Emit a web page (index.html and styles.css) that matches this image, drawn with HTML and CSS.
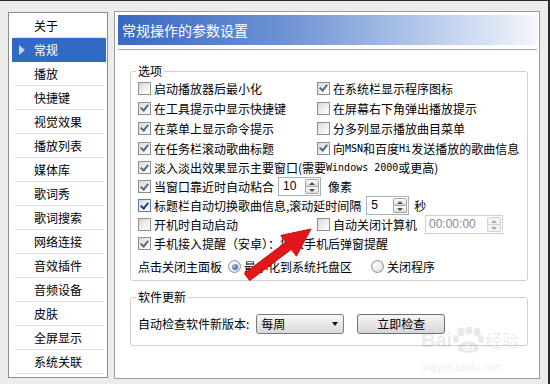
FILE: index.html
```html
<!doctype html>
<html lang="zh-CN">
<head>
    <meta charset="utf-8" />
    <meta name="viewport" content="width=device-width, initial-scale=1.0">
    <title>参数设置</title>
    <link rel="stylesheet" href="styles.css">
</head>
<body>

    <div class="window">
        <!-- 左侧分类列表 -->
        <ul class="nav">
            <li>关于</li>
            <li class="active"><span class="tri"></span>常规</li>
            <li>播放</li>
            <li>快捷键</li>
            <li>视觉效果</li>
            <li>播放列表</li>
            <li>媒体库</li>
            <li>歌词秀</li>
            <li>歌词搜索</li>
            <li>网络连接</li>
            <li>音效插件</li>
            <li>音频设备</li>
            <li>皮肤</li>
            <li>全屏显示</li>
            <li>系统关联</li>
        </ul>

        <!-- 右侧设置面板 -->
        <div class="panel">
            <div class="title">常规操作的参数设置</div>
            <div class="title-line"></div>

            <div class="content">
                <fieldset class="group opts">
                    <legend>选项</legend>

                    <div class="row">
                        <label class="cb col1"><span class="box"></span>启动播放器后最小化</label>
                        <label class="cb"><span class="box on"></span>在系统栏显示程序图标</label>
                    </div>
                    <div class="row">
                        <label class="cb col1"><span class="box on"></span>在工具提示中显示快捷键</label>
                        <label class="cb"><span class="box"></span>在屏幕右下角弹出播放提示</label>
                    </div>
                    <div class="row">
                        <label class="cb col1"><span class="box on"></span>在菜单上显示命令提示</label>
                        <label class="cb"><span class="box"></span>分多列显示播放曲目菜单</label>
                    </div>
                    <div class="row">
                        <label class="cb col1"><span class="box on"></span>在任务栏滚动歌曲标题</label>
                        <label class="cb"><span class="box on"></span>向<span class="mono">MSN</span>和百度<span class="mono">Hi</span>发送播放的歌曲信息</label>
                    </div>
                    <div class="row s">
                        <label class="cb"><span class="box on"></span>淡入淡出效果显示主要窗口(需要<span class="mono">Windows 2000</span>或更高)</label>
                    </div>
                    <div class="row s">
                        <label class="cb"><span class="box on"></span>当窗口靠近时自动粘合</label>
                        <div class="spin sp1"><span class="v">10</span><span class="b"><i class="up"></i><i class="dn"></i></span></div>
                        <span class="unit u1">像素</span>
                    </div>
                    <div class="row s">
                        <label class="cb"><span class="box on focus"></span>标题栏自动切换歌曲信息,滚动延时间隔</label>
                        <div class="spin sp2"><span class="v">5</span><span class="b"><i class="up"></i><i class="dn"></i></span></div>
                        <span class="unit u2">秒</span>
                    </div>
                    <div class="row s">
                        <label class="cb col1"><span class="box"></span>开机时自动启动</label>
                        <label class="cb"><span class="box"></span>自动关闭计算机</label>
                        <div class="spin time"><span class="v">00:00:00</span><span class="b"><i class="up"></i><i class="dn"></i></span></div>
                    </div>
                    <div class="row s">
                        <label class="cb"><span class="box on"></span>手机接入提醒（安卓）：接入手机后弹窗提醒</label>
                    </div>
                    <div class="row s radios">
                        <span>点击关闭主面板</span>
                        <label class="rb r1"><span class="radio on"></span>最小化到系统托盘区</label>
                        <label class="rb r2"><span class="radio"></span>关闭程序</label>
                    </div>
                </fieldset>

                <fieldset class="group update">
                    <legend>软件更新</legend>
                    <div class="row upd">
                        <span>自动检查软件新版本:</span>
                        <div class="select"><span>每周</span><span class="caret"></span></div>
                        <button class="button">立即检查</button>
                    </div>
                </fieldset>
            </div>
        </div>
    </div>

    <!-- 红色箭头（覆盖在内容上） -->
    <svg class="arrow" width="550" height="384" viewBox="0 0 550 384">
        <polygon points="244.3,273.4 285.9,242.2 280.8,235.4 311,229 296.4,256.2 291.3,249.4 249.7,280.6" fill="#e3161c" stroke="#c80d12" stroke-width="1" stroke-linejoin="round"/>
    </svg>

    <!-- 水印 -->
    <div class="watermark">
        <div class="wm-top">
            <span>Bai</span>
            <svg class="paw" width="33" height="26" viewBox="0 0 33 26">
                <ellipse cx="9" cy="5" rx="3.5" ry="4.5" />
                <ellipse cx="17" cy="3.5" rx="3.5" ry="4" />
                <ellipse cx="25" cy="5" rx="3.5" ry="4.5" />
                <ellipse cx="4" cy="12" rx="3" ry="4" />
                <ellipse cx="29" cy="12" rx="3" ry="4" />
                <path d="M6 22 C6 12 27 12 27 22 C27 27 6 27 6 22 Z" />
                <text x="16.5" y="24" text-anchor="middle">du</text>
            </svg>
            <span class="wm-cn">经验</span>
        </div>
        <div class="wm-url">jingyan.baidu.com</div>
    </div>

</body>
</html>
```

FILE: styles.css
```css
* {
    box-sizing: border-box;
}

body {
    margin: 0;
    width: 550px;
    height: 384px;
    overflow: hidden;
    position: relative;
    background-color: #ececec;
    border-top: 1px solid #2a2a2a;
    border-right: 2px solid #2a2a2a;
    font-family: "Noto Sans CJK SC", "Noto Sans", sans-serif;
    font-size: 12px;
    color: #000;
}

.window {
    display: flex;
    align-items: flex-start;
    gap: 6px;
    padding: 10px 0 0 8px;
}

/* 左侧列表 */
.nav {
    list-style: none;
    margin: 1px 0 0;
    padding: 1px 1px 0 3px;
    width: 100px;
    height: 366px;
    background-color: #fff;
    border: 1px solid #8c8c8c;
}

.nav li {
    height: 24px;
    line-height: 23px;
    margin: 0 2px;
    padding-left: 20px;
    border-bottom: 1px solid #e2e2e2;
    white-space: nowrap;
}

.nav li.active {
    margin: 0;
    padding-left: 7px;
    background-color: #316ac5;
    border-bottom-color: #316ac5;
    color: #fff;
    display: flex;
    align-items: center;
}

.tri {
    width: 0;
    height: 0;
    border-left: 6px solid #c4d8f6;
    border-top: 5px solid transparent;
    border-bottom: 5px solid transparent;
    margin-right: 9px;
}

/* 右侧面板 */
.panel {
    width: 426px;
    height: 368px;
    background-color: #fff;
    border: 1px solid #9c9c9c;
    padding: 3px 2px 0 3px;
}

.title {
    height: 30px;
    line-height: 30px;
    padding-left: 4px;
    color: #fff;
    font-size: 14px;
    background: linear-gradient(90deg, #3a69c2 0%, #6e92d3 40%, #b2c7ea 72%, #f4f6fb 100%);
}

.title-line {
    margin-top: 4px;
    border-top: 1px solid #a8a8a8;
}

.content {
    padding: 0 9px 0 12px;
}

.group {
    margin: 14px 0 0;
    padding: 0 7px 4px 7px;
    border: 1px solid #d0d0d0;
    border-radius: 3px;
    min-width: 0;
}

.group legend {
    padding: 0 2px;
    margin-left: -2px;
    line-height: 14px;
}

.group.update {
    margin-top: 9px;
    padding-top: 9px;
    padding-bottom: 11px;
}

.row {
    display: flex;
    align-items: center;
    height: 20px;
    white-space: nowrap;
}

.row.s {
    height: 19px;
}

.cb, .rb {
    display: flex;
    align-items: center;
}

.col1 {
    width: 179px;
}

.mono {
    font-family: "DejaVu Sans Mono", "Liberation Mono", monospace;
    font-size: 10px;
}

/* 复选框 */
.box {
    flex: none;
    width: 13px;
    height: 13px;
    margin-right: 3px;
    border: 1px solid #8e8f8f;
    background: linear-gradient(135deg, #d8d8d3, #f6f6f6 70%, #fff);
    display: flex;
    align-items: center;
    justify-content: center;
}

.box.on::after {
    content: "";
    width: 3px;
    height: 6px;
    border: solid #56698c;
    border-width: 0 2px 2px 0;
    transform: translate(0, -1px) rotate(40deg);
}

.box.focus {
    border-color: #5b7cb4;
}

.box.focus::after {
    border-color: #1c3d8c;
}

/* 数值框 */
.spin {
    display: flex;
    height: 19px;
    border: 1px solid #a9b3bf;
    background-color: #fff;
}

.spin .v {
    flex: 1;
    padding-left: 4px;
    font-family: "Liberation Sans", sans-serif;
    line-height: 17px;
}

.spin .b {
    width: 15px;
    display: flex;
    flex-direction: column;
    padding: 1px 1px 1px 0;
}

.spin i {
    flex: 1;
    border: 1px solid #a4a4a4;
    background: linear-gradient(#fcfcfc, #dedede);
    display: flex;
    align-items: center;
    justify-content: center;
}

.spin i.up {
    border-radius: 2px 2px 0 0;
}

.spin i.dn {
    border-top: none;
    border-radius: 0 0 2px 2px;
}

.spin i.up::after {
    content: "";
    border-left: 3px solid transparent;
    border-right: 3px solid transparent;
    border-bottom: 3px solid #505050;
}

.spin i.dn::after {
    content: "";
    border-left: 3px solid transparent;
    border-right: 3px solid transparent;
    border-top: 3px solid #505050;
}

.sp1 {
    margin-left: 4px;
    width: 43px;
}

.u1 {
    margin-left: 7px;
}

.sp2 {
    margin-left: 5px;
    width: 43px;
}

.u2 {
    margin-left: 5px;
}

.spin.time {
    margin-left: 8px;
    width: 78px;
    border-color: #cfcfcf;
}

.spin.time .v {
    color: #8a8a8a;
    padding-left: 3px;
}

.spin.time i {
    border-color: #d2d2d2;
    background: #f4f4f4;
}

.spin.time i.up::after {
    border-bottom-color: #a8a8a8;
}

.spin.time i.dn::after {
    border-top-color: #a8a8a8;
}

/* 单选框 */
.radios {
    margin-top: 4px;
}

.radio {
    flex: none;
    width: 13px;
    height: 13px;
    margin-right: 3px;
    border-radius: 50%;
    border: 1px solid #8e8f8f;
    background: radial-gradient(circle at 35% 35%, #fff, #d6d6d6);
    display: flex;
    align-items: center;
    justify-content: center;
}

.radio.on::after {
    content: "";
    width: 6px;
    height: 6px;
    border-radius: 50%;
    background: radial-gradient(circle at 35% 35%, #9cc0f0, #1f4f9a);
}

.r1 {
    margin-left: 6px;
}

.r2 {
    margin-left: 19px;
}

/* 软件更新 */
.row.upd {
    height: 21px;
}

.select {
    margin-left: 7px;
    width: 88px;
    height: 20px;
    border: 1px solid #7a7a7a;
    border-radius: 3px;
    background: linear-gradient(#fafafa, #e8e8e8 50%, #d8d8d8);
    display: flex;
    align-items: center;
    justify-content: space-between;
    padding: 0 5px 0 4px;
}

.caret {
    border-left: 3px solid transparent;
    border-right: 3px solid transparent;
    border-top: 4px solid #111;
}

.button {
    margin-left: 13px;
    width: 88px;
    height: 20px;
    padding: 0;
    font-family: inherit;
    font-size: 12px;
    color: #000;
    border: 1px solid #707070;
    border-radius: 3px;
    background: linear-gradient(#f6f6f6, #e6e6e6 50%, #d6d6d6);
}

/* 覆盖物 */
.arrow {
    position: absolute;
    left: 0;
    top: -1px;
    pointer-events: none;
}

.watermark {
    position: absolute;
    left: 421px;
    top: 326px;
    width: 112px;
    white-space: nowrap;
    color: rgba(120, 120, 120, 0.16);
    pointer-events: none;
}

.wm-top {
    display: flex;
    align-items: center;
    font-family: "Liberation Sans", sans-serif;
    font-size: 20px;
    font-weight: bold;
    line-height: 26px;
}

.paw {
    fill: rgba(120, 120, 120, 0.16);
}

.paw text {
    fill: #fff;
    font-family: "Liberation Sans", sans-serif;
    font-size: 9px;
    font-weight: bold;
}

.wm-cn {
    font-family: "Noto Sans CJK SC", sans-serif;
    font-size: 17px;
    font-weight: normal;
}

.wm-url {
    font-family: "Liberation Sans", sans-serif;
    font-size: 10px;
    line-height: 12px;
    margin-top: 9px;
}
```
